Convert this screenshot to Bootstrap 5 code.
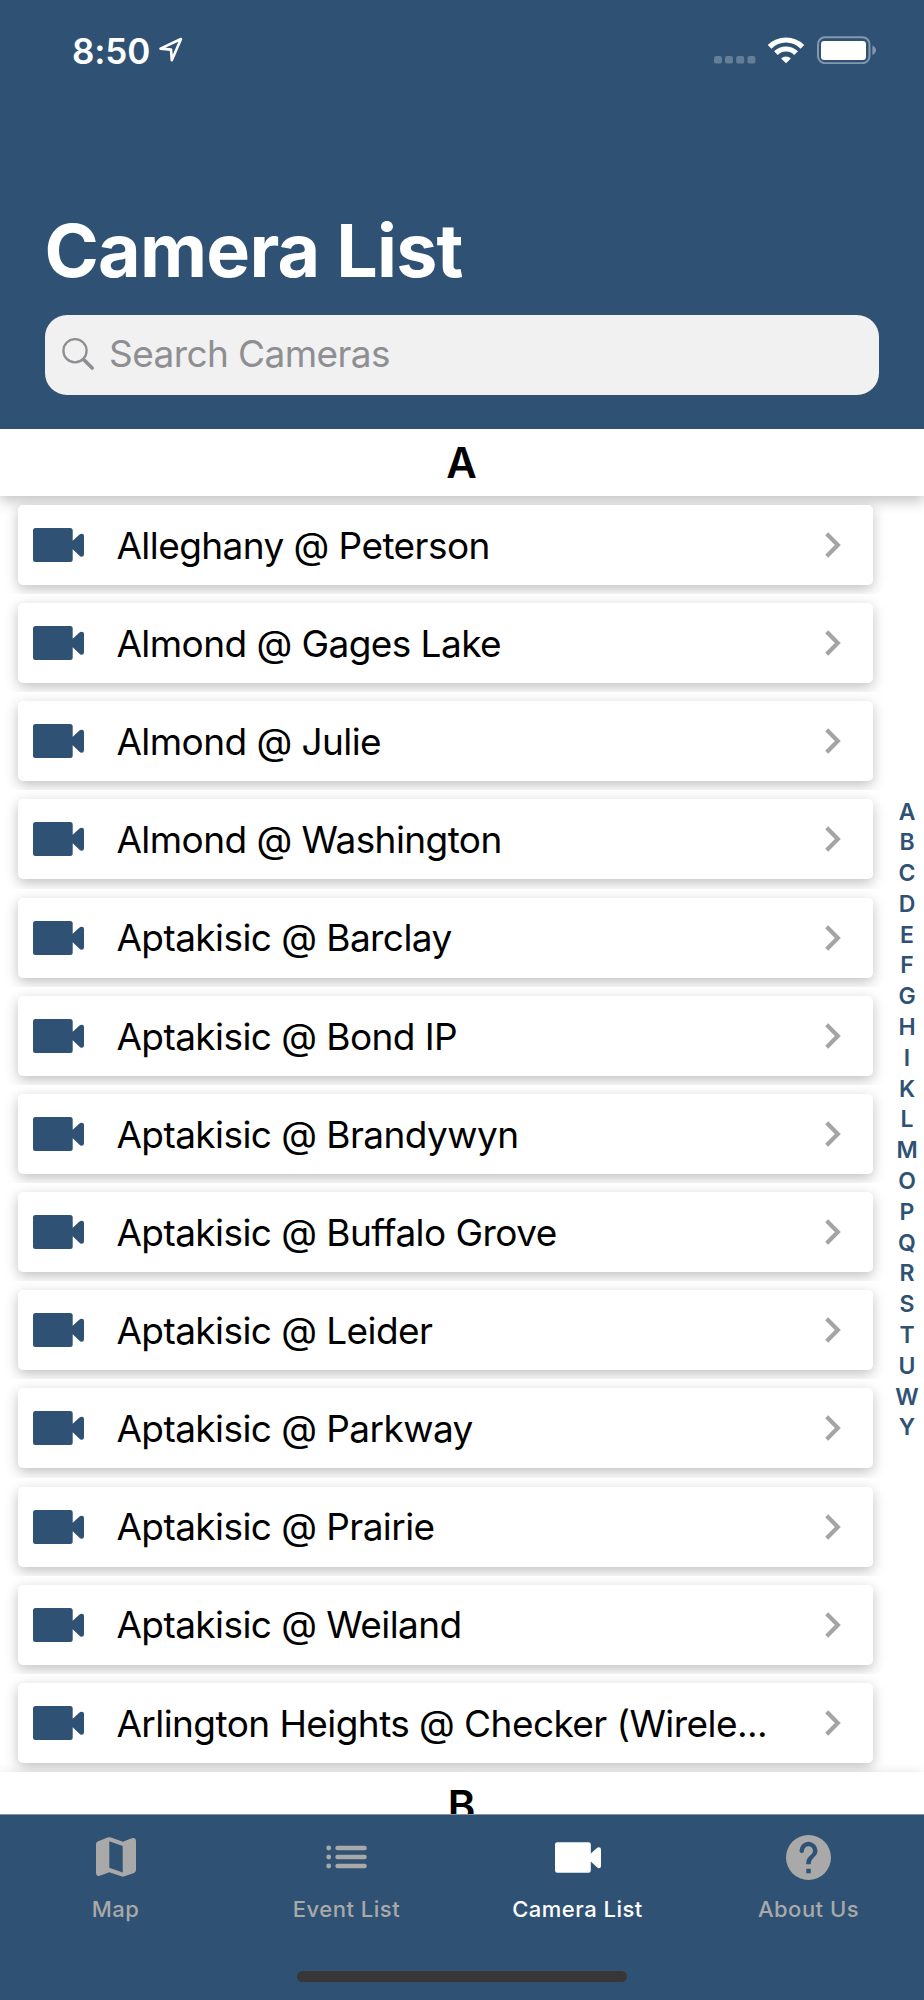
<!DOCTYPE html>
<html lang="en">
<head>
<meta charset="utf-8">
<meta name="viewport" content="width=device-width, initial-scale=1">
<title>Camera List</title>
<link href="https://cdn.jsdelivr.net/npm/bootstrap@5.3.0/dist/css/bootstrap.min.css" rel="stylesheet">
<script src="https://cdn.jsdelivr.net/npm/bootstrap@5.3.0/dist/js/bootstrap.bundle.min.js"></script>
<style>
  :root { --navy: #2f5274; --muted: #a9a9a9; }
  body { font-family: Inter, "Liberation Sans", sans-serif; color: #000; background: #fff; }
  svg { display: block; flex: none; }
  .screen { width: 924px; height: 2000px; }
  .app-header { height: 429px; background: var(--navy); padding: 0 45px; }
  .status-bar { height: 100px; padding: 0 2px 0 27px; }
  .clock { font-size: 35px; font-weight: 600; letter-spacing: -.1px; line-height: 1; padding-top: 2px; }
  .page-title { font-size: 73.5px; font-weight: 700; letter-spacing: -.75px; line-height: 90px; margin: 106px 0 19px -.5px; }
  .search-box { height: 80px; border-radius: 22px; background: #f1f1f1; padding-left: 17px; }
  .search-box input { font-size: 37px; letter-spacing: -.59px; line-height: 50px; padding: 0 0 3px 5px; color: #000; }
  .search-box input::placeholder { color: #8e8e93; opacity: 1; }
  .list-area { height: 1385px; }
  .section-head { height: 67px; line-height: 67px; font-size: 42px; font-weight: 600; background: #fff; box-shadow: 0 5px 13px rgba(0,0,0,.24); padding-right: 1px; }
  .camera-row { height: 98.17px; padding: 9px 51px 9px 18px; overflow: hidden; }
  .camera-card { height: 80px; border: 0; border-radius: 5px; padding: 0 32px 0 15px; box-shadow: 0 4px 13px rgba(0,0,0,.25); background: #fff; color: #000; }
  .camera-name { font-size: 37px; letter-spacing: -.57px; line-height: 80px; margin-left: 32.4px; padding-top: 1.5px; }
  .cam { fill: var(--navy); }
  .alpha-index { right: 0; top: 367.5px; width: 34px; font-size: 23px; font-weight: 600; line-height: 30.8px; color: var(--navy); }
  .tab-bar { height: 186px; background: var(--navy); border-top: 1px solid #7f95aa; }
  .tab-item { padding-top: 18px; color: var(--muted); font-size: 22px; font-weight: 500; letter-spacing: .5px; line-height: 28px; }
  .tab-item.active { color: #fff; }
  .tab-icon { height: 48px; margin-bottom: 14px; }
  .tab-icon svg { fill: currentColor; }
  .home-bar { width: 330px; height: 11px; border-radius: 6px; background: #373737; bottom: 18px; left: 297px; }
</style>
</head>
<body>
<svg width="0" height="0" class="position-absolute" aria-hidden="true">
  <symbol id="i-cam" viewBox="0 0 51 34"><path d="M2.5 0H37.2Q39.7 0 39.7 2.5V12.7L46.2 6.8Q47.3 5.7 48.7 5.7Q51 5.7 51 8V26.3Q51 28.8 48.7 28.8Q47.3 28.8 46.2 27.6L39.7 21.3V31.5Q39.7 34 37.2 34H2.5Q0 34 0 31.5V2.5Q0 0 2.5 0Z"/></symbol>
</svg>
<div class="screen position-relative overflow-hidden d-flex flex-column">
  <header class="app-header text-white">
    <div class="status-bar d-flex align-items-center">
      <span class="clock">8:50</span>
      <svg class="ms-2" width="26" height="28" viewBox="158 37 26 28" fill="none" stroke="#fff" stroke-width="2.6" stroke-linejoin="round"><path d="M160.5 49.6L181 40L171.8 61.2L171 50.6Z"/></svg>
      <svg class="ms-auto" width="163" height="28" viewBox="714 36 163 28">
        <g fill="#647e98"><rect x="714" y="56" width="8" height="7.6" rx="2.2"/><rect x="725" y="56" width="8" height="7.6" rx="2.2"/><rect x="736.2" y="56" width="8" height="7.6" rx="2.2"/><rect x="747.4" y="56" width="8" height="7.6" rx="2.2"/></g>
        <g transform="translate(768 37)" fill="none" stroke="#fff" stroke-width="5.2"><path d="M1.6 9.8A23.2 23.2 0 0 1 34.4 9.8"/><path d="M7.9 16.2A14.3 14.3 0 0 1 28.1 16.2"/><path d="M18 26.3L13.1 21.4A7 7 0 0 1 22.9 21.4Z" fill="#fff" stroke="none"/></g>
        <rect x="818" y="37.2" width="51.5" height="26" rx="7" fill="none" stroke="#8298ad" stroke-width="2"/>
        <rect x="821" y="41" width="45" height="19" rx="3.2" fill="#fff"/>
        <path d="M872.4 45.6Q876 47.5 876 50.3T872.4 55Z" fill="#8298ad"/>
      </svg>
    </div>
    <h1 class="page-title">Camera List</h1>
    <div class="search-box d-flex align-items-center">
      <svg width="34" height="34" viewBox="62 338 34 34" fill="none" stroke="#8e8e93"><circle cx="75" cy="350.7" r="11.6" stroke-width="2.3"/><path d="M83.6 359.4L92.2 368" stroke-width="3.6" stroke-linecap="round"/></svg>
      <input type="text" class="form-control border-0 bg-transparent shadow-none ms-2" placeholder="Search Cameras" aria-label="Search Cameras">
    </div>
  </header>

  <main class="list-area position-relative overflow-hidden">
    <div class="section-head text-center">A</div>
    <div id="cameras"></div>
    <div class="section-head text-center">B</div>
    <nav id="alpha" class="alpha-index position-absolute d-flex flex-column text-center"></nav>
  </main>

  <nav class="tab-bar d-flex position-relative">
    <a class="tab-item col-3 text-center text-decoration-none" href="#">
      <div class="tab-icon d-flex align-items-center justify-content-center"><svg width="40" height="40" viewBox="0 0 40 40"><path fill-rule="evenodd" d="M2.2 4.2L11.5 .6Q13.3 0 15 .6L27 4.7L35.5 1.3Q40 0 40 4.5V33Q40 35.2 38 36L28.5 39.3Q27 39.8 25.3 39.3L13.3 35.2L4.5 38.6Q0 40 0 35.5V7Q0 5 2.2 4.2ZM13.3 4.3V30.7L26.7 35.5V9.1Z"/></svg></div>Map</a>
    <a class="tab-item col-3 text-center text-decoration-none" href="#">
      <div class="tab-icon d-flex align-items-center justify-content-center"><svg width="41" height="24" viewBox="0 0 41 24"><circle cx="2.7" cy="3" r="2.4"/><circle cx="2.7" cy="12" r="2.4"/><circle cx="2.7" cy="21" r="2.4"/><rect x="9.4" y=".8" width="31.3" height="4.4" rx="2"/><rect x="9.4" y="9.8" width="31.3" height="4.4" rx="2"/><rect x="9.4" y="18.8" width="31.3" height="4.4" rx="2"/></svg></div>Event List</a>
    <a class="tab-item active col-3 text-center text-decoration-none" href="#">
      <div class="tab-icon d-flex align-items-center justify-content-center"><svg width="46" height="31"><use href="#i-cam"/></svg></div>Camera List</a>
    <a class="tab-item col-3 text-center text-decoration-none" href="#">
      <div class="tab-icon d-flex align-items-center justify-content-center"><svg width="45" height="45" viewBox="2 2 20 20"><path fill-rule="evenodd" d="M12 2a10 10 0 1 0 0 20a10 10 0 0 0 0-20ZM13 19h-2v-2h2ZM15.07 11.25L14.17 12.17C13.45 12.9 13 13.5 13 15H11V14.5C11 13.4 11.45 12.4 12.17 11.67L13.41 10.41C13.78 10.05 14 9.55 14 9A2 2 0 0 0 10 9A1 1 0 0 1 8 9A4 4 0 0 1 16 9C16 9.88 15.64 10.68 15.07 11.25Z"/></svg></div>About Us</a>
    <div class="home-bar position-absolute"></div>
  </nav>
</div>
<script>
  const cameras = ["Alleghany @ Peterson", "Almond @ Gages Lake", "Almond @ Julie", "Almond @ Washington",
    "Aptakisic @ Barclay", "Aptakisic @ Bond IP", "Aptakisic @ Brandywyn", "Aptakisic @ Buffalo Grove",
    "Aptakisic @ Leider", "Aptakisic @ Parkway", "Aptakisic @ Prairie", "Aptakisic @ Weiland",
    "Arlington Heights @ Checker (Wirele..."];
  document.getElementById("cameras").innerHTML = cameras.map(name => `
    <div class="camera-row"><div class="camera-card card flex-row align-items-center">
      <svg class="cam" width="51" height="34"><use href="#i-cam"/></svg>
      <span class="camera-name text-nowrap">${name}</span>
      <svg class="ms-auto" width="16" height="26" viewBox="0 0 16 26" fill="none" stroke="#a4a4a4" stroke-width="4.2"><path d="M1.7 1.7L12.8 13L1.7 24.3"/></svg>
    </div></div>`).join("");
  document.getElementById("alpha").innerHTML = [..."ABCDEFGHIKLMOPQRSTUWY"].map(l => `<span>${l}</span>`).join("");
</script>
</body>
</html>
